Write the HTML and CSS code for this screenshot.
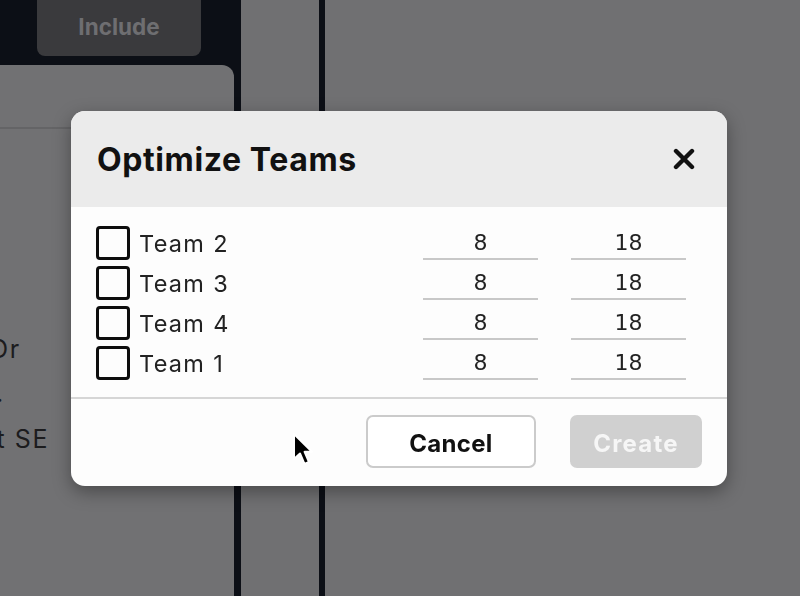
FILE: index.html
```html
<!DOCTYPE html>
<html>
<head>
<meta charset="utf-8">
<link rel="stylesheet" href="styles.css">
</head>
<body>
<div class="app">
  <div class="left">
    <div class="topbar">
      <div class="include">Include</div>
    </div>
    <div class="card">
      <div class="card-head"></div>
      <div class="card-body">
        <div class="cline or">Or</div>
        <div class="cline dot">.</div>
        <div class="cline se">rt SE</div>
      </div>
    </div>
  </div>
  <div class="divider"></div>
  <div class="mid"></div>
  <div class="divider second"></div>
  <div class="right"></div>
</div>

<div class="overlay">
  <div class="dialog">
    <div class="dlg-head">
      <div class="dlg-title">Optimize Teams</div>
      <svg class="close" width="22" height="22" viewBox="0 0 22 22"><path d="M3 3 L19 19 M19 3 L3 19" stroke="#111" stroke-width="4.4" stroke-linecap="round"/></svg>
    </div>
    <div class="dlg-body">
      <div class="row">
        <div class="check"></div><div class="label">Team 2</div>
        <div class="field">8</div><div class="field">18</div>
      </div>
      <div class="row">
        <div class="check"></div><div class="label">Team 3</div>
        <div class="field">8</div><div class="field">18</div>
      </div>
      <div class="row">
        <div class="check"></div><div class="label">Team 4</div>
        <div class="field">8</div><div class="field">18</div>
      </div>
      <div class="row">
        <div class="check"></div><div class="label">Team 1</div>
        <div class="field">8</div><div class="field">18</div>
      </div>
    </div>
    <div class="dlg-foot">
      <div class="btn cancel">Cancel</div>
      <div class="btn create">Create</div>
    </div>
  </div>
</div>

<svg class="cursor" width="22" height="36" viewBox="0 0 22 36">
  <path d="M2 2 L2 27 L8 21.5 L12.5 32 L17 30 L12.6 19.8 L20 19.8 Z" fill="#000" stroke="#fff" stroke-width="2" stroke-linejoin="round"/>
</svg>
</body>
</html>
```

FILE: styles.css
```css
html, body {
  margin: 0;
  padding: 0;
}
body {
  width: 800px;
  height: 596px;
  overflow: hidden;
  background: #707072;
  font-family: "Inter", sans-serif;
}
.app {
  display: grid;
  grid-template-columns: 236px 5px 78px 6px 1fr;
  height: 596px;
}
.left {
  background: #0c0f16;
  display: flex;
  flex-direction: column;
  overflow: hidden;
}
.topbar {
  height: 65px;
  padding-left: 37px;
}
.include {
  width: 164px;
  height: 56px;
  background: #3a3a3d;
  border-radius: 0 0 8px 8px;
  color: #6e6e71;
  font-family: "Inter", sans-serif;
  font-weight: 700;
  font-size: 22.5px;
  display: flex;
  align-items: center;
  justify-content: center;
  padding-bottom: 3px;
  box-sizing: border-box;
}
.card {
  flex: 1;
  width: 234px;
  background: #717173;
  border-top-right-radius: 12px;
}
.card-head {
  height: 62px;
  border-bottom: 2px solid #646466;
}
.cline {
  color: #1c1c1e;
  font-family: "Inter", sans-serif;
  font-size: 25px;
  letter-spacing: 1.6px;
  line-height: 30px;
  white-space: nowrap;
}
.or {
  margin-top: 205px;
  margin-left: -11px;
}
.dot {
  margin-top: 14px;
  margin-left: -4px;
  height: 30px;
}
.se {
  margin-top: 16px;
  margin-left: -15px;
}
.divider {
  background: #0c0f16;
}
.mid, .right {
  background: #707072;
}

.overlay {
  position: fixed;
  inset: 0;
  display: flex;
  align-items: center;
  justify-content: center;
}
.dialog {
  width: 656px;
  height: 375px;
  background: #fdfdfd;
  border-radius: 14px;
  overflow: hidden;
  box-shadow: 0 6px 18px rgba(0, 0, 0, 0.35);
  display: flex;
  flex-direction: column;
  margin-left: -2px;
  margin-top: 1px;
}
.dlg-head {
  height: 96px;
  background: #ebebeb;
  display: flex;
  align-items: center;
  justify-content: space-between;
  padding: 0 32px 0 26px;
  flex-shrink: 0;
}
.dlg-title {
  font-family: "Inter", sans-serif;
  font-weight: 700;
  font-size: 32px;
  color: #111;
  letter-spacing: 0.6px;
}
.close {
  display: block;
  margin-top: 0;
}
.dlg-body {
  padding: 16px 41px 14px 25px;
  border-bottom: 2px solid #d6d6d6;
}
.row {
  display: flex;
  align-items: center;
  height: 40px;
}
.check {
  width: 28px;
  height: 28px;
  border: 3.5px solid #0d0d0d;
  border-radius: 4px;
  flex-shrink: 0;
}
.label {
  margin-left: 9px;
  flex: 1;
  font-family: "Inter", sans-serif;
  font-size: 23.5px;
  color: #222;
  letter-spacing: 1.3px;
}
.field {
  width: 115px;
  height: 34px;
  border-bottom: 2px solid #c8c8c8;
  box-sizing: border-box;
  display: flex;
  align-items: center;
  justify-content: center;
  font-family: "DejaVu Sans", sans-serif;
  font-size: 22px;
  color: #222;
  padding-top: 1px;
}
.field + .field {
  margin-left: 33px;
}
.dlg-foot {
  flex: 1;
  display: flex;
  justify-content: flex-end;
  align-items: flex-start;
  padding: 16px 25px 0 0;
  gap: 34px;
}
.btn {
  height: 53px;
  box-sizing: border-box;
  border-radius: 7px;
  display: flex;
  align-items: center;
  justify-content: center;
  font-family: "Inter", sans-serif;
  font-weight: 700;
  font-size: 24px;
  padding-top: 3px;
}
.cancel {
  width: 170px;
  border: 2.5px solid #cbcbcb;
  color: #111;
  background: #fff;
  letter-spacing: 0.3px;
}
.create {
  width: 132px;
  background: #d0d0d0;
  color: #f6f6f6;
  letter-spacing: 1.2px;
}
.cursor {
  position: fixed;
  left: 292px;
  top: 432px;
}
```
